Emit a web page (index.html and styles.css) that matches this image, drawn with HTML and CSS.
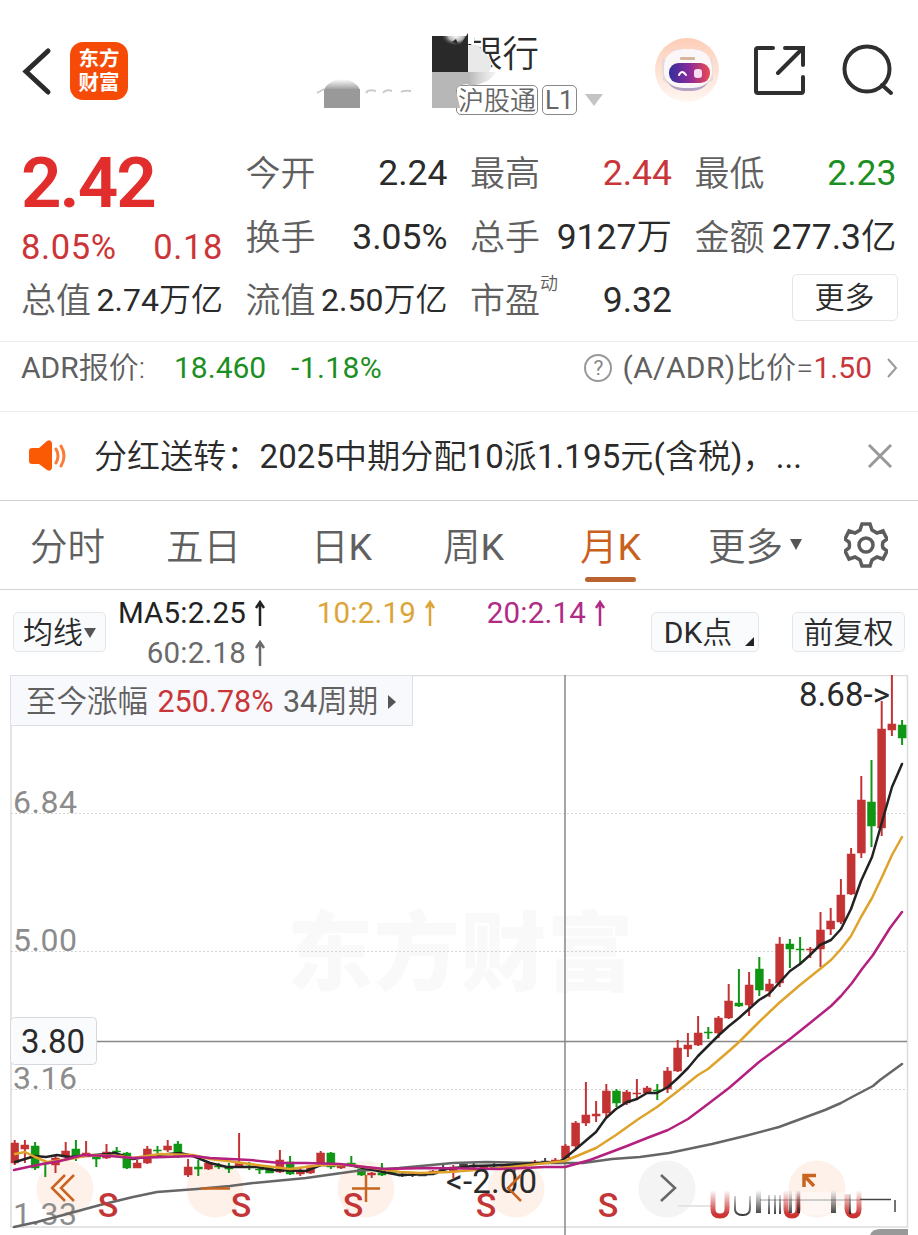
FILE: index.html
```html
<!DOCTYPE html>
<html lang="zh-CN">
<head>
    <meta charset="UTF-8">
    <meta name="viewport" content="width=device-width, initial-scale=1.0">
    <title>月K</title>
    <link rel="stylesheet" href="styles.css">
</head>
<body>
    <!-- Header -->
    <header class="topbar">
        <svg class="back" width="30" height="50" viewBox="0 0 30 50"><path d="M26 5L4 25.500L26 46" /></svg>
        <div class="logo"><span>东方</span><span>财富</span></div>
        <div class="stock">
            <div class="stock-name">银行</div>
            <div class="stock-tags">
                <span class="tag">沪股通</span>
                <span class="tag num">L1</span>
                <svg width="20" height="13" viewBox="0 0 20 13"><path d="M1 0H19L10 12Z" fill="#c4c4c4" /></svg>
            </div>
            <svg class="mask" width="240" height="100" viewBox="310 25 240 100">
                <defs>
                    <linearGradient id="fade-up" x1="0" y1="0" x2="0" y2="1">
                        <stop offset="0" stop-color="#999" stop-opacity="0" />
                        <stop offset="1" stop-color="#999" />
                    </linearGradient>
                    <radialGradient id="white-spot">
                        <stop offset="0" stop-color="#fff" />
                        <stop offset=".5" stop-color="#ddd" stop-opacity=".8" />
                        <stop offset="1" stop-color="#292929" stop-opacity="0" />
                    </radialGradient>
                    <linearGradient id="swoosh" x1="0" y1="0" x2="1" y2="0">
                        <stop offset="0" stop-color="#b4b4b4" />
                        <stop offset="1" stop-color="#e8e8e8" stop-opacity=".5" />
                    </linearGradient>
                    <clipPath id="spot-clip"><rect x="432" y="36" width="36" height="36" /></clipPath>
                </defs>
                <path d="M462 28H482V38H474V44H462Z" fill="#fff" />
                <rect x="432" y="36" width="36" height="36" fill="#292929" />
                <ellipse cx="456" cy="36" rx="15" ry="10" fill="url(#white-spot)" clip-path="url(#spot-clip)" />
                <path d="M452 42L456 39L458 44ZM461 44L468 33V42L462 48Z" fill="#292929" />
                <path d="M468 45H478Q481 50 486 54Q495 62 489 72H468Z" fill="#e9e9e9" />
                <path d="M468 72H496Q490 84 468 86Z" fill="url(#swoosh)" />
                <path d="M432 72H468V84Q458 84 456 90L460 108H432Z" fill="#b7b7b7" />
                <path d="M324 90Q328 80 342 79Q356 80 360 90Z" fill="url(#fade-up)" />
                <rect x="324" y="89" width="36" height="19" fill="#999" />
                <path d="M317 93L324 89M366 93Q368 89 376 91M383 93Q386 89 392 91M401 92Q404 90 411 91" fill="none" stroke="#ccc" stroke-width="2" />
            </svg>
        </div>
        <svg class="robot" width="64" height="64" viewBox="0 0 64 64">
            <defs>
                <linearGradient id="halo" x1="0" y1="0" x2="0" y2="1">
                    <stop offset="0" stop-color="#fdcdb8" />
                    <stop offset="1" stop-color="#fff6f1" />
                </linearGradient>
                <linearGradient id="visor" x1="0" y1="0" x2="1" y2="0">
                    <stop offset="0" stop-color="#31309c" />
                    <stop offset=".5" stop-color="#8a2a9a" />
                    <stop offset="1" stop-color="#ec4a50" />
                </linearGradient>
            </defs>
            <circle cx="32" cy="32" r="32" fill="url(#halo)" />
            <path d="M7 19L13 26V46L8 42ZM57 19L52 26V45L58 42Z" fill="#e3d9dc" />
            <path d="M10 30Q11 12 28 11H38Q54 12 55 30V36Q54 51 38 53H28Q12 51 10 36Z" fill="#b3a4c4" />
            <path d="M9 29Q10 12 28 11H38Q55 12 57 29V36Q54 49 38 50H28Q12 49 9 36Z" fill="#fbf7f8" />
            <rect x="25" y="19" width="15" height="3" rx="1" fill="#d8b69c" />
            <rect x="14" y="25" width="41" height="20" rx="9.500" fill="url(#visor)" />
            <path d="M24 37Q27 31 31 37" fill="none" stroke="#fff" stroke-width="2" stroke-linecap="round" />
            <rect x="39" y="31" width="8" height="9" rx="3" fill="#fbdcf5" />
        </svg>
        <svg class="share" width="52" height="52" viewBox="0 0 52 52">
            <path d="M20 3H5Q3 3 3 5V46Q3 48 5 48H48Q50 48 50 46V32M32 3H50V20M49 4L25 28" />
        </svg>
        <svg class="search" width="54" height="54" viewBox="0 0 54 54">
            <circle cx="25" cy="26" r="22.500" /><path d="M40 42L49 50" />
        </svg>
    </header>

    <!-- Quote numbers -->
    <section class="quote">
        <div class="price">
            <div class="price-now">2.42</div>
            <div class="price-change"><span>8.05%</span><span>0.18</span></div>
        </div>
        <div class="cell"><label>今开</label><b>2.24</b></div>
        <div class="cell"><label>最高</label><b class="up">2.44</b></div>
        <div class="cell"><label>最低</label><b class="down">2.23</b></div>
        <div class="cell"><label>换手</label><b>3.05%</b></div>
        <div class="cell"><label>总手</label><b>9127<span class="unit">万</span></b></div>
        <div class="cell"><label>金额</label><b>277.3<span class="unit">亿</span></b></div>
        <div class="cell cell-tight"><label>总值</label><b>2.74<span class="unit">万亿</span></b></div>
        <div class="cell cell-tight"><label>流值</label><b>2.50<span class="unit">万亿</span></b></div>
        <div class="cell"><label>市盈<sup>动</sup></label><b>9.32</b></div>
        <div class="cell cell-more"><button class="more">更多</button></div>
    </section>

    <!-- ADR -->
    <section class="adr">
        <span class="adr-label"><span class="num">ADR</span>报价:</span>
        <span class="down adr-price">18.460</span>
        <span class="down adr-rate">-1.18%</span>
        <span class="help">?</span>
        <span class="adr-ratio"><span class="num">(A/ADR)</span>比价=<span class="up">1.50</span></span>
        <svg width="12" height="22" viewBox="0 0 12 22"><path d="M2 2L10 11L2 20" fill="none" stroke="#999" stroke-width="2" /></svg>
    </section>

    <!-- Notice -->
    <section class="notice">
        <svg width="40" height="34" viewBox="0 0 40 34">
            <path d="M4 9H11L19 2Q23 0 24 4V29Q23 33 19 31L11 25H4Q1 25 1 22V12Q1 9 4 9Z" fill="#fb5a05" />
            <path d="M28 10Q32 17 28 24M33 7Q39 17 33 27" fill="none" stroke="#fb7a35" stroke-width="3" stroke-linecap="round" />
        </svg>
        <span class="notice-text">分红送转：<span class="num">2025</span>中期分配<span class="num">10</span>派<span class="num">1.195</span>元<span class="num">(</span>含税<span class="num">)</span>，<span class="num">...</span></span>
        <svg class="close" width="28" height="28" viewBox="0 0 28 28"><path d="M3 3L25 25M25 3L3 25" /></svg>
    </section>

    <!-- Period tabs -->
    <nav class="tabs">
        <span>分时</span>
        <span>五日</span>
        <span>日<span class="num">K</span></span>
        <span>周<span class="num">K</span></span>
        <span class="active">月<span class="num">K</span></span>
        <span>更多<i class="caret"></i></span>
        <svg width="44" height="46" viewBox="0 0 44 46">
            <path d="M18 2H26L28 8L33 11L39 9L43 17L39 20Q38 23 39 26L43 29L39 37L33 35L28 38L26 44H18L16 38L11 35L5 37L1 29L5 26Q6 23 5 20L1 17L5 9L11 11L16 8Z" />
            <circle cx="22" cy="23" r="7" />
        </svg>
    </nav>

    <!-- Moving averages -->
    <section class="averages">
        <button class="chip chip-ma">均线<i class="caret"></i></button>
        <div class="ma-list">
            <span class="ma5">MA5:2.25<svg class="arrow" viewBox="0 0 12 26"><path d="M6 26V3M2 8L6 2L10 8" /></svg></span>
            <span class="ma10">10:2.19<svg class="arrow" viewBox="0 0 12 26"><path d="M6 26V3M2 8L6 2L10 8" /></svg></span>
            <span class="ma20">20:2.14<svg class="arrow" viewBox="0 0 12 26"><path d="M6 26V3M2 8L6 2L10 8" /></svg></span>
            <span class="ma60">60:2.18<svg class="arrow" viewBox="0 0 12 26"><path d="M6 26V3M2 8L6 2L10 8" /></svg></span>
        </div>
        <button class="chip chip-dk"><span class="num">DK</span>点<i class="corner"></i></button>
        <button class="chip chip-right">前复权</button>
    </section>

    <!-- K line chart -->
    <section class="chart">
        <svg width="918" height="560" viewBox="0 675 918 560">
            <defs>
                <linearGradient id="smear-red" gradientUnits="userSpaceOnUse" x1="0" y1="1190" x2="0" y2="1214">
                    <stop offset="0" stop-color="#c33" stop-opacity="0" />
                    <stop offset="1" stop-color="#c33" />
                </linearGradient>
                <linearGradient id="smear-dark" gradientUnits="userSpaceOnUse" x1="0" y1="1190" x2="0" y2="1218">
                    <stop offset="0" stop-color="#222" stop-opacity="0" />
                    <stop offset="1" stop-color="#222" />
                </linearGradient>
            </defs>
            <text class="watermark" x="287" y="984" textLength="346">东方财富</text>
            <g class="frame">
                <path d="M11 675.500H907.500V1227H11Z" />
                <path class="dots" d="M11 813.500H907M11 951.500H907M11 1089.500H907" />
            </g>
            <g class="pads">
                <circle cx="65" cy="1189" r="28.500" />
                <circle cx="215" cy="1189" r="28.500" />
                <circle cx="366" cy="1189" r="28.500" />
                <circle cx="516" cy="1189" r="28.500" />
                <circle class="pad-grey" cx="667" cy="1189" r="28.500" />
                <circle cx="817" cy="1189" r="28.500" />
            </g>
            <g class="scale">
                <text x="13" y="813" textLength="64">6.84</text>
                <text x="13" y="951" textLength="64">5.00</text>
                <text x="13" y="1089" textLength="64">3.16</text>
                <text x="13" y="1225" textLength="64">1.33</text>
            </g>
            <path class="cross" d="M565 675V1235M97 1041.500H907" />
            <g id="candles"></g>
            <path class="line line60" d="M14 1227L37 1222L67 1214L100 1205L133 1197L157 1192L197 1189L230 1186L253 1183L306 1178L356 1171L399 1168L453 1163L486 1162L536 1163L583 1163L612 1159L640 1157L669 1153L712 1144L745 1136L779 1127L825 1110L841 1103L852 1097L873 1086L880 1080L902 1064" />
            <path class="line line5" d="M15 1162L25 1159L35 1156L46 1157L57 1155L70 1157L107 1154L115 1153L133 1159L157 1155L180 1153L193 1156L210 1163L227 1167L257 1167L273 1170L306 1171L321 1165L349 1165L373 1170L399 1175L433 1174L446 1169L473 1166L506 1165L539 1163L559 1162L565 1158L576 1149L596 1132L606 1118L616 1109L627 1102L637 1099L647 1093L657 1093L668 1087L678 1078L688 1068L698 1056L708 1046L719 1035L729 1026L739 1018L749 1009L759 1000L769 994L779 983L790 971L800 964L810 955L820 945L831 940L841 929L851 909L861 881L872 857L882 822L892 787L902 764" />
            <path class="line line10" d="M15 1154L25 1152L35 1157L47 1162L70 1159L90 1155L120 1156L133 1158L160 1154L193 1155L210 1159L235 1162L257 1165L290 1169L321 1165L350 1165L380 1169L400 1172L420 1173L450 1172L500 1168L565 1161L572 1158L596 1148L616 1135L637 1120L657 1107L678 1091L698 1075L708 1069L729 1051L739 1042L759 1022L779 1003L800 985L820 969L831 960L841 949L851 936L861 917L872 898L882 877L892 855L902 837" />
            <path class="line line20" d="M14 1170L37 1165L60 1161L83 1155L110 1156L133 1158L165 1157L193 1156L210 1158L250 1160L280 1163L306 1163L340 1164L365 1167L385 1169L430 1168L500 1169L545 1167L565 1167L590 1160L627 1146L647 1138L668 1130L688 1119L708 1104L729 1088L759 1062L790 1039L810 1023L831 1006L841 996L852 983L862 969L873 955L890 928L902 912" />
            <g class="peak">
                <text x="799" y="706" textLength="91">8.68-&gt;</text>
                <text x="446" y="1193" textLength="91">&lt;-2.00</text>
            </g>
            <rect class="price-box" x="10.500" y="1017.500" width="86" height="47" rx="4" />
            <text class="price-text" x="21" y="1053" textLength="64">3.80</text>
            <g class="signals">
                <text x="108" y="1217">S</text>
                <text x="241" y="1217">S</text>
                <text x="353" y="1217">S</text>
                <text x="486" y="1217">S</text>
                <text x="608" y="1217">S</text>
            </g>
            <g class="controls">
                <path d="M65 1175L52 1188L65 1201M74 1175L61 1188L74 1201" />
                <path d="M201 1188.500H230M352 1188.500H380M366 1175V1202M521 1175L508 1188L521 1201" />
                <path class="grey" d="M661 1175L675 1188L661 1201" />
                <path class="diag" d="M804 1187V1175.500H816M804.500 1176L814 1186" />
            </g>
            <!-- smudged strip at the right bottom -->
            <g class="smear">
                <rect x="696" y="1192" width="196" height="23" fill="#fff" opacity=".4" />
                <path d="M678 1206H712" stroke="#e4e4e4" stroke-width="2" />
                <path d="M760 1200H860" stroke="#ccc" stroke-width="2" />
                <path d="M860 1199.500H891M895 1200V1212" stroke="#444" stroke-width="1.500" />
                <path d="M713 1191V1209Q713 1216 720 1216Q727 1216 727 1209V1191" stroke="url(#smear-red)" stroke-width="5" />
                <path d="M735 1196V1210Q736 1215 743 1215Q750 1215 750 1208V1196" stroke="url(#smear-dark)" stroke-width="2" />
                <path d="M786 1191V1209Q786 1216 792 1216Q798 1216 798 1209V1191" stroke="url(#smear-red)" stroke-width="5" />
                <path d="M847 1194V1209Q848 1216 853 1216Q859 1216 859 1209V1191" stroke="url(#smear-red)" stroke-width="5" />
                <g fill="url(#smear-dark)">
                    <rect x="756" y="1190" width="5" height="23" />
                    <rect x="768" y="1195" width="2" height="19" />
                    <rect x="774" y="1195" width="2" height="19" />
                    <rect x="779" y="1195" width="2" height="19" />
                    <rect x="789" y="1190" width="3" height="23" />
                    <rect x="797" y="1190" width="3" height="23" />
                    <rect x="831" y="1190" width="5" height="23" />
                    <rect x="849" y="1194" width="2" height="20" />
                </g>
            </g>
            <path d="M870 1235Q872 1229 880 1229H908V1235Z" fill="#999" />
        </svg>
        <div class="range">至今涨幅 <span class="up">250.78%</span> <span class="num">34</span>周期<i class="play"></i></div>
    </section>

    <script src="chart.js"></script>
</body>
</html>
```
FILE: styles.css
```css
* {
    box-sizing: border-box;
}
body {
    margin: 0;
    width: 918px;
    height: 1235px;
    overflow: hidden;
    background: #fff;
    color: #2b2b2b;
    font-family: Roboto, "Noto Sans CJK SC", sans-serif;
    font-weight: 350;
    line-height: 1.2;
}
button {
    font-family: inherit;
    font-weight: inherit;
    color: inherit;
    padding: 0;
}
/* digits and latin letters */
.num {
    font-weight: 400;
}
.unit {
    font-weight: 350;
}
.up {
    color: #c8363a;
}
.down {
    color: #1c8f22;
}

/* Header */
.topbar {
    display: flex;
    align-items: flex-start;
    height: 141px;
    padding: 0 22px;
}
.topbar svg {
    flex: none;
}
.back {
    margin-top: 46px;
    fill: none;
    stroke: #2b2b2b;
    stroke-width: 5;
    stroke-linecap: round;
}
.logo {
    display: flex;
    flex-direction: column;
    align-items: center;
    width: 58px;
    height: 58px;
    margin: 42px 0 0 18px;
    padding-top: 5px;
    border-radius: 13px;
    background: #f64b06;
    color: #fff;
    font-size: 20.5px;
    line-height: 24px;
    font-weight: 700;
}
.stock {
    position: relative;
    margin: 25px 0 0 182px;
    width: 240px;
    height: 100px;
}
.stock-name {
    padding-left: 156px;
    font-size: 36.5px;
    line-height: 60px;
}
.stock-tags {
    display: flex;
    align-items: center;
    gap: 4px;
    margin-left: 146px;
    width: 160px;
}
.tag {
    height: 30px;
    padding: 0 1px;
    border: 1.5px solid #888;
    border-radius: 5px;
    color: #666;
    font-size: 26px;
    line-height: 30px;
}
.tag + .tag {
    padding: 0 2px;
    line-height: 28px;
}
.stock-tags svg {
    margin-left: 3px;
}
.mask {
    position: absolute;
    left: 0;
    top: 0;
}
.robot {
    margin: 38px 0 0 105px;
}
.share, .search {
    fill: none;
    stroke: #2f2f2f;
    stroke-width: 4;
    stroke-linecap: round;
}
.share {
    margin: 45px 0 0 34px;
}
.search {
    margin: 43px 0 0 37px;
}

/* Quote */
.quote {
    display: grid;
    grid-template-columns: repeat(4, 202px);
    grid-template-rows: 64px 64px 63px;
    column-gap: 22.5px;
    height: 201px;
    padding: 0 21px;
    border-bottom: 1px solid #ececec;
}
.price {
    grid-row: span 2;
    color: #e12d2c;
}
.price-now {
    height: 81px;
    font-size: 71px;
    line-height: 83px;
    font-weight: 600;
    letter-spacing: -2px;
}
.price-change {
    display: flex;
    justify-content: space-between;
    font-size: 34.5px;
    line-height: 50px;
    font-weight: 400;
    letter-spacing: .6px;
    color: #cc3538;
}
.cell {
    display: flex;
    align-items: center;
    justify-content: space-between;
    white-space: nowrap;
}
.cell label {
    position: relative;
    padding-top: 3px;
    font-size: 35px;
    color: #606060;
}
.cell b {
    font-size: 35.5px;
    font-weight: 400;
}
.cell-tight b {
    font-size: 32px;
}
.cell sup {
    position: absolute;
    left: 70px;
    top: -6px;
    font-size: 18px;
    line-height: 24px;
}
.cell-more {
    justify-content: flex-end;
}
.more {
    width: 106px;
    height: 47px;
    margin: -6px -1px 0 0;
    border: 1px solid #e6e6e6;
    border-radius: 5px;
    background: #fff;
    font-size: 30px;
    line-height: 46px;
}

/* ADR */
.adr {
    display: flex;
    align-items: center;
    height: 70px;
    padding: 0 20px 17px 21px;
    border-bottom: 1px solid #ececec;
    color: #606060;
    font-size: 30px;
    white-space: nowrap;
}
.adr-label {
    width: 153px;
}
.adr-price {
    width: 117px;
    font-weight: 400;
}
.adr-rate {
    font-weight: 400;
    letter-spacing: .4px;
}
.help {
    width: 28px;
    height: 28px;
    margin: 0 10px 0 auto;
    border: 2px solid #999;
    border-radius: 50%;
    color: #888;
    font-size: 21px;
    font-weight: 400;
    line-height: 25px;
    text-align: center;
}
.adr-ratio {
    margin-right: 14px;
    letter-spacing: .4px;
}
.adr-ratio .up {
    font-weight: 400;
    letter-spacing: 0;
}

/* Notice */
.notice {
    display: flex;
    align-items: center;
    height: 89px;
    padding: 0 24px 0 28px;
    border-bottom: 1px solid #cfcfcf;
    font-size: 33px;
}
.notice-text {
    flex: 1;
    padding: 2px 0 0 26px;
    letter-spacing: .1px;
    white-space: nowrap;
}
.close {
    stroke: #999;
    stroke-width: 3;
}

/* Tabs */
.tabs {
    display: grid;
    grid-template-columns: 136px 145px 132px 137px 128px 136px 44px;
    align-items: center;
    height: 89px;
    padding-left: 30px;
    border-bottom: 1px solid #d4d4d4;
    color: #606060;
    font-size: 37.5px;
    white-space: nowrap;
}
.tabs > span {
    padding-top: 4px;
}
.tabs .active {
    position: relative;
    color: #c9601c;
}
.tabs .active::after {
    content: "";
    position: absolute;
    left: 5px;
    bottom: -12px;
    width: 51px;
    height: 5px;
    border-radius: 3px;
    background: #bb6330;
}
.tabs svg {
    fill: none;
    stroke: #5c5c5c;
    stroke-width: 3.5;
}
.caret {
    display: inline-block;
    border: 6.5px solid transparent;
    border-top: 11px solid #555;
    border-bottom: 0;
    margin-left: 7px;
    vertical-align: 10px;
}

/* Averages */
.averages {
    display: flex;
    height: 85px;
    padding-left: 13px;
    font-size: 29.5px;
}
.chip {
    flex: none;
    position: relative;
    height: 40px;
    margin-top: 22px;
    border: 1px solid #e3e6ea;
    border-radius: 5px;
    background: #fafbfd;
    font-size: 30px;
    line-height: 39px;
}
.chip-ma {
    width: 93px;
}
.chip-ma .caret {
    border-width: 10px 6px 0;
    margin-left: 1px;
    vertical-align: 5px;
}
.chip-dk {
    width: 108px;
    padding-right: 14px;
}
.chip-right {
    width: 113px;
    margin-left: 33px;
}
.corner {
    position: absolute;
    right: 4px;
    bottom: 5px;
    border-left: 9px solid transparent;
    border-bottom: 9px solid #222;
}
.ma-list {
    flex: none;
    display: grid;
    grid-template-columns: 160px 170px 170px;
    grid-template-rows: 40px 40px;
    width: 545px;
    padding-top: 3px;
    line-height: 41px;
    font-weight: 400;
    white-space: nowrap;
}
.ma-list span {
    text-align: right;
    letter-spacing: .2px;
}
.arrow {
    width: 12px;
    height: 26px;
    margin-left: 8px;
    vertical-align: -3px;
    fill: none;
    stroke: currentColor;
    stroke-width: 2.5;
}
.ma5 {
    color: #222;
}
.ma10 {
    color: #dba53a;
}
.ma20 {
    color: #b02a86;
}
.ma60 {
    color: #6a6a6a;
}

/* Chart */
.chart {
    position: relative;
    height: 560px;
}
.chart > svg {
    display: block;
}
.range {
    position: absolute;
    left: 10px;
    top: 0;
    width: 403px;
    height: 51px;
    padding-left: 15px;
    border: 1px solid #dde1e6;
    background: #f8f9fc;
    color: #606060;
    font-size: 30.5px;
    line-height: 51px;
    white-space: nowrap;
}
.range .up {
    margin: 0 2px;
    font-weight: 400;
}
.play {
    display: inline-block;
    margin-left: 10px;
    border: 7px solid transparent;
    border-left: 8px solid #555;
    border-right: 0;
    vertical-align: 3px;
}
.watermark {
    font-size: 86px;
    font-weight: 900;
    fill: #f9f9f9;
}
.frame path {
    fill: none;
    stroke: #dcdcdc;
    stroke-width: 1.5;
}
.frame .dots {
    stroke: #d5d5d5;
    stroke-width: 1;
    stroke-dasharray: 2 2;
}
.scale text {
    font-size: 32px;
    font-weight: 400;
    fill: #8c8c8c;
}
.pads circle {
    fill: #fef1ea;
}
.pads .pad-grey {
    fill: #f4f4f4;
}
.cross {
    fill: none;
    stroke: #888;
    stroke-width: 1.5;
}
.rise {
    fill: #c43334;
    stroke: #c43334;
}
.fall {
    fill: #0f9614;
    stroke: #0f9614;
}
.flat {
    fill: #444;
    stroke: #444;
}
.line {
    fill: none;
    stroke-width: 2.5;
    stroke-linejoin: round;
    stroke-linecap: round;
}
.line5 {
    stroke: #222;
}
.line10 {
    stroke: #dfa32c;
}
.line20 {
    stroke: #b4207f;
}
.line60 {
    stroke: #666;
}
.peak text, .price-text {
    font-size: 33px;
    font-weight: 400;
    fill: #2a2a2a;
}
.price-box {
    fill: #fafbfd;
    stroke: #d5d9de;
}
.signals text {
    font-size: 34px;
    font-weight: 500;
    fill: #c33638;
    text-anchor: middle;
}
.controls path {
    fill: none;
    stroke: #c8641f;
    stroke-width: 2.5;
}
.controls .grey {
    stroke: #666;
}
.controls .diag {
    stroke-width: 3.5;
}
.smear path {
    fill: none;
}
```
FILE: chart.js
```js
// kind, high, body top, body bottom, low
const candles = [
    ['r', 1140, 1143, 1163, 1165], ['r', 1140, 1145, 1149, 1163], ['g', 1142, 1146, 1168, 1170], ['g', 1161, 1163, 1164, 1177],
    ['r', 1155, 1158, 1165, 1173], ['r', 1142, 1151, 1157, 1161], ['g', 1140, 1149, 1156, 1161], ['r', 1141, 1153, 1157, 1157],
    ['g', 1157, 1157, 1159, 1167], ['r', 1144, 1152, 1158, 1159], ['g', 1147, 1151, 1152, 1154], ['g', 1152, 1153, 1168, 1169],
    ['r', 1160, 1163, 1168, 1168], ['r', 1146, 1149, 1163, 1164], ['g', 1146, 1150, 1151, 1154], ['r', 1140, 1146, 1150, 1152],
    ['g', 1141, 1144, 1157, 1158], ['r', 1159, 1167, 1175, 1177], ['g', 1160, 1167, 1169, 1176], ['r', 1162, 1163, 1169, 1170],
    ['g', 1163, 1166, 1167, 1169], ['g', 1163, 1167, 1169, 1173], ['r', 1133, 1163, 1167, 1168], ['g', 1162, 1166, 1167, 1170],
    ['g', 1167, 1169, 1170, 1174], ['g', 1166, 1167, 1173, 1173], ['r', 1150, 1160, 1172, 1173], ['g', 1156, 1162, 1174, 1175],
    ['r', 1167, 1171, 1174, 1176], ['r', 1165, 1166, 1173, 1174], ['r', 1151, 1153, 1163, 1165], ['g', 1152, 1153, 1167, 1169],
    ['r', 1164, 1165, 1168, 1169], ['g', 1156, 1163, 1165, 1166], ['g', 1168, 1169, 1175, 1176], ['r', 1172, 1173, 1175, 1178],
    ['g', 1163, 1173, 1175, 1176], ['g', 1169, 1171, 1173, 1175], ['d', 1173, 1174, 1176, 1177], ['d', 1172, 1174, 1175, 1177],
    ['d', 1173, 1174, 1176, 1176], ['r', 1170, 1171, 1174, 1175], ['d', 1163, 1168, 1170, 1172], ['r', 1165, 1167, 1172, 1178],
    ['d', 1162, 1164, 1166, 1168], ['d', 1163, 1165, 1167, 1168], ['r', 1165, 1166, 1168, 1169], ['d', 1163, 1167, 1168, 1170],
    ['r', 1164, 1165, 1167, 1168], ['d', 1163, 1165, 1167, 1172], ['r', 1163, 1164, 1166, 1167], ['r', 1160, 1162, 1163, 1164],
    ['d', 1158, 1161, 1162, 1163], ['r', 1158, 1160, 1161, 1163], ['r', 1144, 1146, 1158, 1159], ['r', 1121, 1123, 1146, 1148],
    ['r', 1082, 1115, 1123, 1126], ['r', 1101, 1114, 1116, 1122], ['r', 1084, 1091, 1113, 1117], ['g', 1089, 1091, 1103, 1107],
    ['r', 1090, 1092, 1103, 1105], ['r', 1079, 1093, 1094, 1100], ['r', 1086, 1088, 1093, 1094], ['g', 1084, 1090, 1091, 1100],
    ['r', 1067, 1071, 1089, 1093], ['r', 1040, 1048, 1071, 1072], ['r', 1033, 1045, 1049, 1057], ['r', 1016, 1033, 1045, 1046],
    ['g', 1027, 1032, 1033, 1039], ['r', 1016, 1018, 1033, 1038], ['r', 984, 1001, 1018, 1019], ['g', 969, 1003, 1006, 1007],
    ['r', 972, 985, 1005, 1016], ['g', 957, 969, 990, 996], ['r', 979, 984, 991, 997], ['r', 937, 944, 983, 987],
    ['g', 939, 944, 949, 968], ['g', 937, 949, 950, 965], ['r', 947, 949, 950, 958], ['r', 912, 930, 949, 967],
    ['r', 908, 921, 929, 935], ['r', 879, 895, 922, 924], ['r', 848, 854, 894, 895], ['r', 776, 800, 853, 858],
    ['g', 760, 802, 826, 847], ['r', 701, 729, 828, 836], ['r', 675, 724, 730, 736], ['g', 720, 725, 738, 745]
];
const names = { r: 'rise', g: 'fall', d: 'flat' };

document.getElementById('candles').innerHTML = candles.map((c, i) => {
    const x = 14.7 + i * 10.2;
    const [kind, high, top, bottom, low] = c;
    // the first body is cut by the frame
    const left = Math.max(11, x - 4);
    return `<g class="${names[kind]}">
        <path d="M${x} ${high}V${low}" stroke-width="2" />
        <rect x="${left}" y="${top}" width="${x + 4 - left}" height="${Math.max(1, bottom - top)}" stroke-width=".5" />
    </g>`;
}).join('');
```
